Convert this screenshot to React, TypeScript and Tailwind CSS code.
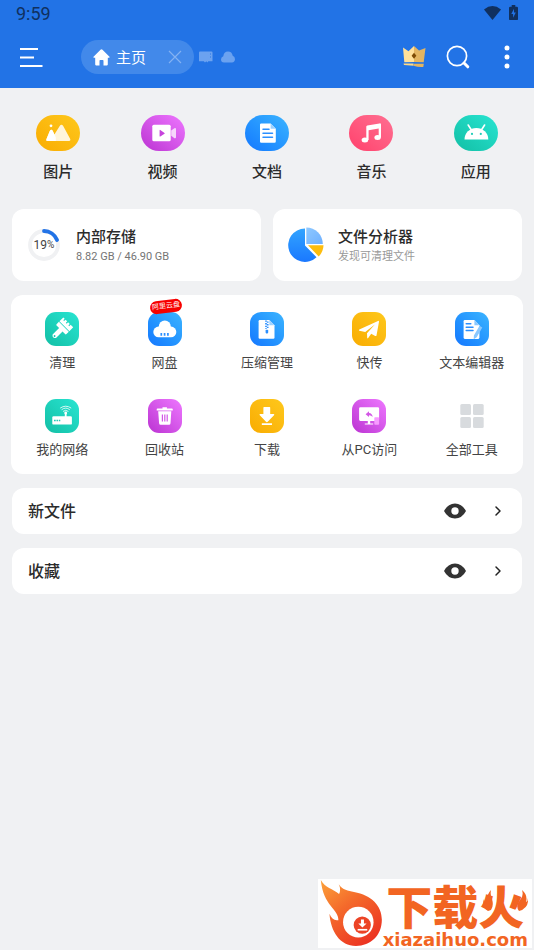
import type { ReactNode } from 'react';
import { ChevronRight } from 'lucide-react';

interface Item {
  label: string;
  tile: string;
  icon: ReactNode;
  badge?: string;
}

const YELLOW = 'bg-linear-to-tr from-[#f9ac00] to-[#fec81b]';
const PURPLE = 'bg-linear-to-tr from-[#bb31d2] to-[#ee76ff]';
const BLUE = 'bg-linear-to-tr from-[#1677ff] to-[#3cb4ff]';
const PINK = 'bg-linear-to-tr from-[#ff3f6c] to-[#ff6f92]';
const TEAL = 'bg-linear-to-tr from-[#12bfa5] to-[#28e5d2]';

const categories: Item[] = [
  {
    label: '图片',
    tile: YELLOW,
    icon: (
      <>
        <circle cx="15" cy="10.8" r="1.4" />
        <path d="M11.5 26a1.2 1.2 0 0 1-1.1-1.7l3.4-8.3q1.5-2.6 3 0l1.6 3.5 5.3-8.6q1.8-2.4 3.5 0l6.9 12.9c.6 1.2.2 2.2-1 2.2z" fillOpacity=".85" />
        <path d="M11.5 26a1.2 1.2 0 0 1-1.1-1.7l3.4-8.3q1.5-2.6 3 0l3 6.5V26z" />
      </>
    ),
  },
  {
    label: '视频',
    tile: PURPLE,
    icon: (
      <>
        <rect x="11.3" y="9.7" width="18.4" height="16.5" rx="1.5" />
        <path d="M30.2 15.6l3.2-2.4q1.6-.6 1.6 1v8q0 1.6-1.6 1l-3.2-2.4z" fillOpacity=".75" />
        <path d="M18.6 15.2v6q.1.6.7.3l4.2-2.7q.5-.5 0-.9l-4.2-3q-.6-.3-.7.3z" fill="#c643dc" />
      </>
    ),
  },
  {
    label: '文档',
    tile: BLUE,
    icon: (
      <>
        <path d="M16.2 8.4h9.4l5.2 5.4v12.6q0 1.3-1.3 1.3H16.2q-1.2 0-1.2-1.3V9.6q0-1.2 1.2-1.2z" />
        <path d="M25.6 8.4l5.2 5.4h-5.2z" fill="#9ed2ff" />
        <path d="M18 14.3h6M18 18.3h9.5M18 22.3h9.5" stroke="#2b8fff" strokeWidth="1.5" strokeLinecap="round" />
      </>
    ),
  },
  {
    label: '音乐',
    tile: PINK,
    icon: (
      <>
        <ellipse cx="15.9" cy="25" rx="3.3" ry="2.5" />
        <ellipse cx="28.6" cy="22.6" rx="3.2" ry="2.5" />
        <path d="M17.3 11.6q0-1 1-1.2l12.2-2q1.5-.2 1.5 1v13.2h-2.3V13.5l-10.1 1.7V25h-2.3z" />
      </>
    ),
  },
  {
    label: '应用',
    tile: TEAL,
    icon: (
      <>
        <path d="M10.5 24.4a11.9 11.4 0 0 1 23.8 0z" />
        <path d="M14.2 10l3.2 5M30.6 10l-3.2 5" stroke="#fff" strokeWidth="1.6" strokeLinecap="round" />
        <circle cx="18" cy="18.9" r="1.1" fill="#1fcdb7" />
        <circle cx="26.8" cy="18.9" r="1.1" fill="#1fcdb7" />
      </>
    ),
  },
];

const tools: Item[] = [
  {
    label: '清理',
    tile: TEAL,
    icon: (
      <g transform="translate(19 14.6) rotate(45)">
        <path d="M-7-6h2v2h1.2v-2h2.4v2h1.2v-2h2.4v2h1.2v-2H7v5.4H-7z" />
        <path d="M-7 .2H7v3.3q0 1-1 1H2.4v9.2q-2.4 3.4-4.8 0V4.5H-6q-1 0-1-1z" />
        <circle cx="0" cy="13.3" r=".9" fill="#18c9b2" />
      </g>
    ),
  },
  {
    label: '网盘',
    tile: BLUE,
    badge: '阿里云盘',
    icon: (
      <>
        <circle cx="16.8" cy="14.6" r="6" />
        <rect x="5.3" y="14.6" width="23" height="10.6" rx="5.3" />
        <path d="M13.3 21v2.8M16.6 21v2.8M19.9 21v2.8" stroke="#2b8fff" strokeWidth="1.7" />
      </>
    ),
  },
  {
    label: '压缩管理',
    tile: BLUE,
    icon: (
      <>
        <path d="M9.8 8h9.5l5.2 5.3v12.2q0 1.2-1.2 1.2H9.8q-1.2 0-1.2-1.2V9.2Q8.6 8 9.8 8z" />
        <path d="M19.3 8l5.2 5.3h-5.2z" fill="#9ed2ff" />
        <path d="M16 8.5v8.5M17.7 9.5v7.5" stroke="#2b8fff" strokeWidth="1.7" strokeDasharray="1.3 1.3" />
        <rect x="15.6" y="17.8" width="2.6" height="3.6" rx=".8" fill="#2b8fff" />
      </>
    ),
  },
  {
    label: '快传',
    tile: YELLOW,
    icon: (
      <path d="M7.3 17.5L26 8.9q1.1-.3 1 .9l-2.5 13.6q-.3 1-1.3.6l-4-2.2-3 4.3q-.9.8-1-.4l-.2-4.5 7.9-8.6-9.7 7.5-5.8-1.3q-1-.6-.1-1.3z" />
    ),
  },
  {
    label: '文本编辑器',
    tile: BLUE,
    icon: (
      <>
        <path d="M9.8 8h9.6l5 5.3v12.3q0 1.3-1.2 1.3H9.8q-1.2 0-1.2-1.3V9.2Q8.6 8 9.8 8z" />
        <path d="M19.4 8l5 5.3h-5zM24.5 13.8l2.8 1.7-5.6 9.7-3 2 .2-3.7z" fill="#8ac8ff" />
        <path d="M11.2 11.8h4.6M11.2 15.2h6.8M11.2 18.6h6.8" stroke="#2b8fff" strokeWidth="1.5" strokeLinecap="round" />
      </>
    ),
  },
  {
    label: '我的网络',
    tile: TEAL,
    icon: (
      <>
        <rect x="7.3" y="17.3" width="19.6" height="8.3" rx="1.2" />
        <path d="M19.8 14h1.8v4h-1.8z" />
        <circle cx="20.7" cy="14" r="1.4" />
        <path d="M18.3 12.2q2.4-2 4.8 0M16.9 10.5q3.8-3 7.6 0M15.5 8.9q5.2-3.6 10.4 0" fill="none" stroke="#fff" strokeWidth=".8" strokeLinecap="round" />
        <path d="M9 21.5h1.7M11.5 21.5h1.7M14 21.5h1.3" stroke="#1fcdb7" strokeWidth="1.6" />
      </>
    ),
  },
  {
    label: '回收站',
    tile: PURPLE,
    icon: (
      <>
        <path d="M9.5 9.5h5V8.2h4.4v1.3h5q.9 0 .9.9v1H8.7v-1q0-.9.8-.9zM10.2 12.3h13.1l-.8 12q-.1 1.5-1.5 1.5h-8.4q-1.4 0-1.5-1.5z" />
        <path d="M14.4 15.5v7M16.8 15.5v7M19.2 15.5v7" stroke="#d357e6" strokeWidth="1.2" />
      </>
    ),
  },
  {
    label: '下载',
    tile: YELLOW,
    icon: (
      <path d="M14 8h5.6q.6 0 .6.6V15h3.4q1.3.2.4 1.3l-6.3 6.5q-.9.7-1.7 0l-6.2-6.5q-1-1.1.4-1.3h3.2V8.6q0-.6.6-.6zM12 24.3h9.8q.7.8 0 1.7H12q-.7-.9 0-1.7z" />
    ),
  },
  {
    label: '从PC访问',
    tile: PURPLE,
    icon: (
      <>
        <path d="M8.4 8.3h17.4q1.3 0 1.3 1.3v11q0 1.3-1.3 1.3h-7.6v2.5h3v1.1h-8.4v-1.1h3v-2.5H8.4q-1.3 0-1.3-1.3v-11q0-1.3 1.3-1.3z" />
        <path d="M13.6 15.2l3.4-2.9v1.7q3.3.3 3.6 4-1.3-1.8-3.6-1.7V18z" fill="#d357e6" />
        <rect x="22.3" y="18.2" width="4.8" height="7.5" rx=".8" fill="#f79bff" />
      </>
    ),
  },
  {
    label: '全部工具',
    tile: '',
    icon: (
      <g fill="#d8dbde">
        <rect x="5.3" y="5" width="10.7" height="11" rx="1.5" />
        <rect x="18" y="5" width="10.7" height="11" rx="1.5" />
        <rect x="5.3" y="18" width="10.7" height="11" rx="1.5" />
        <rect x="18" y="18" width="10.7" height="11" rx="1.5" />
      </g>
    ),
  },
];

function StatusBar() {
  return (
    <div className="flex h-7 items-center justify-between px-4 text-[#10305f]">
      <span className="text-lg leading-7">9:59</span>
      <div className="flex items-center gap-2 pb-0.5">
        <svg className="h-4 w-[17px]" viewBox="0 0 17 16" fill="currentColor">
          <path d="M0 4.5q8.5-6.8 17 0L8.5 15z" />
        </svg>
        <svg className="h-4 w-[9px]" viewBox="0 0 9 16" fill="currentColor">
          <path d="M2.7 0h3.6v1.7h1.5q1.2 0 1.2 1.2v11q0 1.2-1.2 1.2H1.2Q0 15.1 0 13.9v-11q0-1.2 1.2-1.2h1.5z" />
          <path d="M5 3.7L2.3 8.9h1.8v3.8l2.7-5.3H5z" fill="#2273e6" />
        </svg>
      </div>
    </div>
  );
}

function Toolbar() {
  return (
    <div className="flex h-15 items-center pb-0.5 pl-5 pr-4">
      <button aria-label="菜单">
        <svg className="h-5 w-[23px]" viewBox="0 0 23 20" stroke="#fff" strokeWidth="1.8">
          <path d="M0 2h18M0 10.5h14M0 19h22.5" />
        </svg>
      </button>
      <div className="ml-[38px] flex h-[34px] w-[113px] items-center rounded-full bg-[#4289ea] px-3">
        <button className="flex items-center gap-1.5 text-white">
          <svg className="h-[17px] w-[17px]" viewBox="0 0 17 17" fill="#fff">
            <path d="M7.5.8q1-.9 2 0l7 7q.5.9-.5 1h-1.2v6.8q0 .8-.8.8h-3.5v-4.7q0-.8-.8-.8H7.3q-.8 0-.8.8v4.7H3q-.8 0-.8-.8V8.8H1q-1-.1-.5-1z" />
          </svg>
          <span className="pt-0.5 text-[15px] leading-5">主页</span>
        </button>
        <button className="ml-auto" aria-label="关闭">
          <svg className="h-3.5 w-3.5" viewBox="0 0 14 14" stroke="#83b2f2" strokeWidth="1.2">
            <path d="M1 1l12 12M13 1L1 13" />
          </svg>
        </button>
      </div>
      <svg className="ml-[5px] h-3 w-3.5" viewBox="0 0 14 12" fill="#6ba2f0">
        <path d="M1 .5h11.5q1 0 1 1v8.7H9.3l-1 1.2-1-1.2-1.3 1.2-1.2-1.2H0V1.5q0-1 1-1z" />
        <path d="M11.5 2v6" stroke="#3f86ea" strokeWidth=".8" strokeDasharray="2 1" />
      </svg>
      <svg className="ml-2 h-3 w-3.5" viewBox="0 0 14 12" fill="#6ba2f0">
        <path d="M3 11.5Q0 11.2 0 8.4 0 6 2.3 5.3 2.8.8 7 .6q4 .1 4.7 4.2Q14 5.5 14 8.3q-.2 2.9-3 3.2z" />
      </svg>
      <button className="ml-auto" aria-label="会员">
        <svg className="h-6 w-6" viewBox="0 0 24 24">
          <path d="M1 2.5l5.5 3.7L12 1v16l-9.7.3z" fill="#ffe09a" />
          <path d="M12 1l5 4.5 6.5-2.4-1.8 14.1-9.7-.2z" fill="#e3b562" />
          <path d="M12 7.7l2.4 3-2.4 3-2.4-3z" fill="#7e4b05" />
          <path d="M1.5 18.6h10v2.2l-9.5-.8z" fill="#ffd984" />
          <path d="M11.5 18.8h10.3l-.5 3.2q-5 .4-9.8-1.2z" fill="#e3b562" />
        </svg>
      </button>
      <button className="ml-5" aria-label="搜索">
        <svg className="h-6 w-6" viewBox="0 0 24 24" fill="none" stroke="#fff">
          <circle cx="11" cy="11" r="9.6" strokeWidth="1.7" />
          <path d="M18 18l3.8 3.8" strokeWidth="3" strokeLinecap="round" />
        </svg>
      </button>
      <button className="ml-[26px]" aria-label="更多">
        <svg className="h-6 w-[22px]" viewBox="0 0 22 24" fill="#fff">
          <circle cx="11" cy="3" r="2.5" />
          <circle cx="11" cy="12" r="2.5" />
          <circle cx="11" cy="21" r="2.5" />
        </svg>
      </button>
    </div>
  );
}

function StorageRing({ percent }: { percent: number }) {
  const length = 2 * Math.PI * 14;
  return (
    <div className="relative size-8">
      <svg className="size-8" viewBox="0 0 32 32" fill="none" strokeWidth="3.8">
        <circle cx="16" cy="16" r="14" stroke="#f0f1f3" />
        <circle
          cx="16"
          cy="16"
          r="14"
          stroke="#2273e6"
          strokeLinecap="round"
          strokeDasharray={`${(length * percent) / 100} ${length}`}
          transform="rotate(-90 16 16)"
        />
      </svg>
      <span className="absolute inset-0 flex items-center justify-center text-xs text-[#444]">
        {percent}<span className="text-[10px]">%</span>
      </span>
    </div>
  );
}

function PieIcon() {
  return (
    <svg className="size-9" viewBox="0 0 36 36">
      <defs>
        <linearGradient id="pieBlue" x1="0" y1="0" x2="0" y2="1">
          <stop offset="0" stopColor="#32a4ff" />
          <stop offset="1" stopColor="#1a78ff" />
        </linearGradient>
        <linearGradient id="pieLight" x1="0" y1="0" x2="1" y2="1">
          <stop offset="0" stopColor="#8ec8ff" />
          <stop offset="1" stopColor="#6eb0ff" />
        </linearGradient>
      </defs>
      <path d="M17 1.5v17L28.5 30.2A16.7 16.7 0 1 1 17 1.5z" fill="url(#pieBlue)" />
      <path d="M18.3.5A16.5 16.5 0 0 1 34.8 17H18.3z" fill="url(#pieLight)" />
      <path d="M20 18.3h15.5q-.2 6.5-4.8 11.2z" fill="#fdbd0e" />
    </svg>
  );
}

function SectionRow({ title }: { title: string }) {
  return (
    <section className="flex h-[46px] items-center rounded-xl bg-white px-4">
      <h2 className="pt-0.5 text-base font-medium leading-6 text-[#2b2b2b]">{title}</h2>
      <button className="ml-auto" aria-label={`显示${title}`}>
        <svg className="h-4 w-[22px]" viewBox="0 0 22 16" fill="#333">
          <path fillRule="evenodd" d="M0 8Q4 .5 11 .5T22 8q-4 7.5-11 7.5T0 8zm11-3.7a3.7 3.7 0 1 0 0 7.4 3.7 3.7 0 0 0 0-7.4z" />
        </svg>
      </button>
      <button className="ml-6" aria-label={`打开${title}`}>
        <ChevronRight className="size-4 text-[#222]" strokeWidth={2.2} />
      </button>
    </section>
  );
}

function SiteBanner() {
  return (
    <a href="#" className="mr-0.5 mt-auto mb-0.5 flex h-[69px] self-end bg-white pr-1">
      <svg className="h-[69px] w-[65px]" viewBox="30 27 195 208">
        <defs>
          <linearGradient id="flame" x1="0" y1="0" x2=".7" y2="1">
            <stop offset="0" stopColor="#fca23a" />
            <stop offset=".45" stopColor="#f46a2b" />
            <stop offset="1" stopColor="#ec3422" />
          </linearGradient>
        </defs>
        <path
          d="M38 30C50 53 75 57 93 72q7-13-1-29c12 18 28 19 46 23 53 10 84 41 84 84 0 47-34 79-78 79-48 0-76-43-80-97 6 14 15 22 27 19C93 119 45 108 38 30z"
          fill="url(#flame)"
        />
        <circle cx="151" cy="157" r="46" fill="#fff" />
        <circle cx="163" cy="166" r="26" fill="#ec4426" />
        <path d="M159 149h9v12h8l-12.5 12-12.5-12h8z" fill="#fff" />
        <path d="M149 180h29" stroke="#fff" strokeWidth="5" />
      </svg>
      <div className="relative flex flex-col text-[#f26522]">
        <span className="h-[54px] text-center text-[46px] font-black leading-[58px]">下载火</span>
        <span className="text-center font-['DejaVu_Sans','Noto_Sans_CJK_SC',sans-serif] text-[18px] font-bold leading-[14px]">
          xiazaihuo.com
        </span>
        <svg className="absolute right-0 top-2.5 h-6 w-[46px]" viewBox="0 0 46 24" fill="#f26522">
          <path d="M6 22Q-1 18 2 10q0 4 3 5Q4 6 9 1q-1 5 1 9 2 7-1 11z" />
          <path d="M37 22q-4-5 1-11 4-4 2-10 6 5 4 12 2-1 2-4 1 10-9 13z" />
        </svg>
      </div>
    </a>
  );
}

export default function App() {
  return (
    <div className="flex min-h-screen flex-col bg-[#f0f1f3] font-[Roboto,'Noto_Sans_CJK_SC',sans-serif]">
      <header className="bg-[#2273e6]">
        <StatusBar />
        <Toolbar />
      </header>

      {/* File categories */}
      <nav className="grid grid-cols-5 px-1.5 pt-[27px]">
        {categories.map((item) => (
          <button key={item.label} className="flex flex-col items-center gap-[9px]">
            <span className={`h-9 w-11 rounded-full ${item.tile}`}>
              <svg className="h-9 w-11" viewBox="0 0 44 36" fill="#fff">{item.icon}</svg>
            </span>
            <span className="text-[15px] font-medium leading-6 text-[#2b2b2b]">{item.label}</span>
          </button>
        ))}
      </nav>

      <main className="mt-[25px] flex flex-col gap-3.5 px-3">
        <div className="grid grid-cols-2 gap-3">
          <button className="flex h-18 items-center gap-4 rounded-xl bg-white pl-4 text-left">
            <StorageRing percent={19} />
            <span className="flex flex-col pt-1">
              <span className="text-[15px] font-medium leading-5 text-[#2b2b2b]">内部存储</span>
              <span className="text-[11px] leading-5 text-[#757575]">8.82 GB / 46.90 GB</span>
            </span>
          </button>
          <button className="flex h-18 items-center gap-3.5 rounded-xl bg-white pl-[15px] text-left">
            <PieIcon />
            <span className="flex flex-col pt-1">
              <span className="text-[15px] font-medium leading-5 text-[#2b2b2b]">文件分析器</span>
              <span className="text-[11px] leading-5 text-[#999]">发现可清理文件</span>
            </span>
          </button>
        </div>

        {/* Tools */}
        <div className="-mx-px grid grid-cols-5 gap-y-[26px] rounded-xl bg-white pt-[17px] pb-3.5">
          {tools.map((item) => (
            <button key={item.label} className="flex flex-col items-center gap-[7px]">
              <span className={`relative size-[34px] rounded-[11px] ${item.tile}`}>
                <svg className="size-[34px]" viewBox="0 0 34 34" fill="#fff">{item.icon}</svg>
                {item.badge && (
                  <span className="absolute -top-3 left-0.5 -rotate-7 rounded-full bg-[#f70000] px-0.5 text-[7px] leading-[13px] whitespace-nowrap text-white">
                    {item.badge}
                  </span>
                )}
              </span>
              <span className="text-[13px] leading-5 text-[#444]">{item.label}</span>
            </button>
          ))}
        </div>

        <SectionRow title="新文件" />
        <SectionRow title="收藏" />
      </main>

      <SiteBanner />
    </div>
  );
}
